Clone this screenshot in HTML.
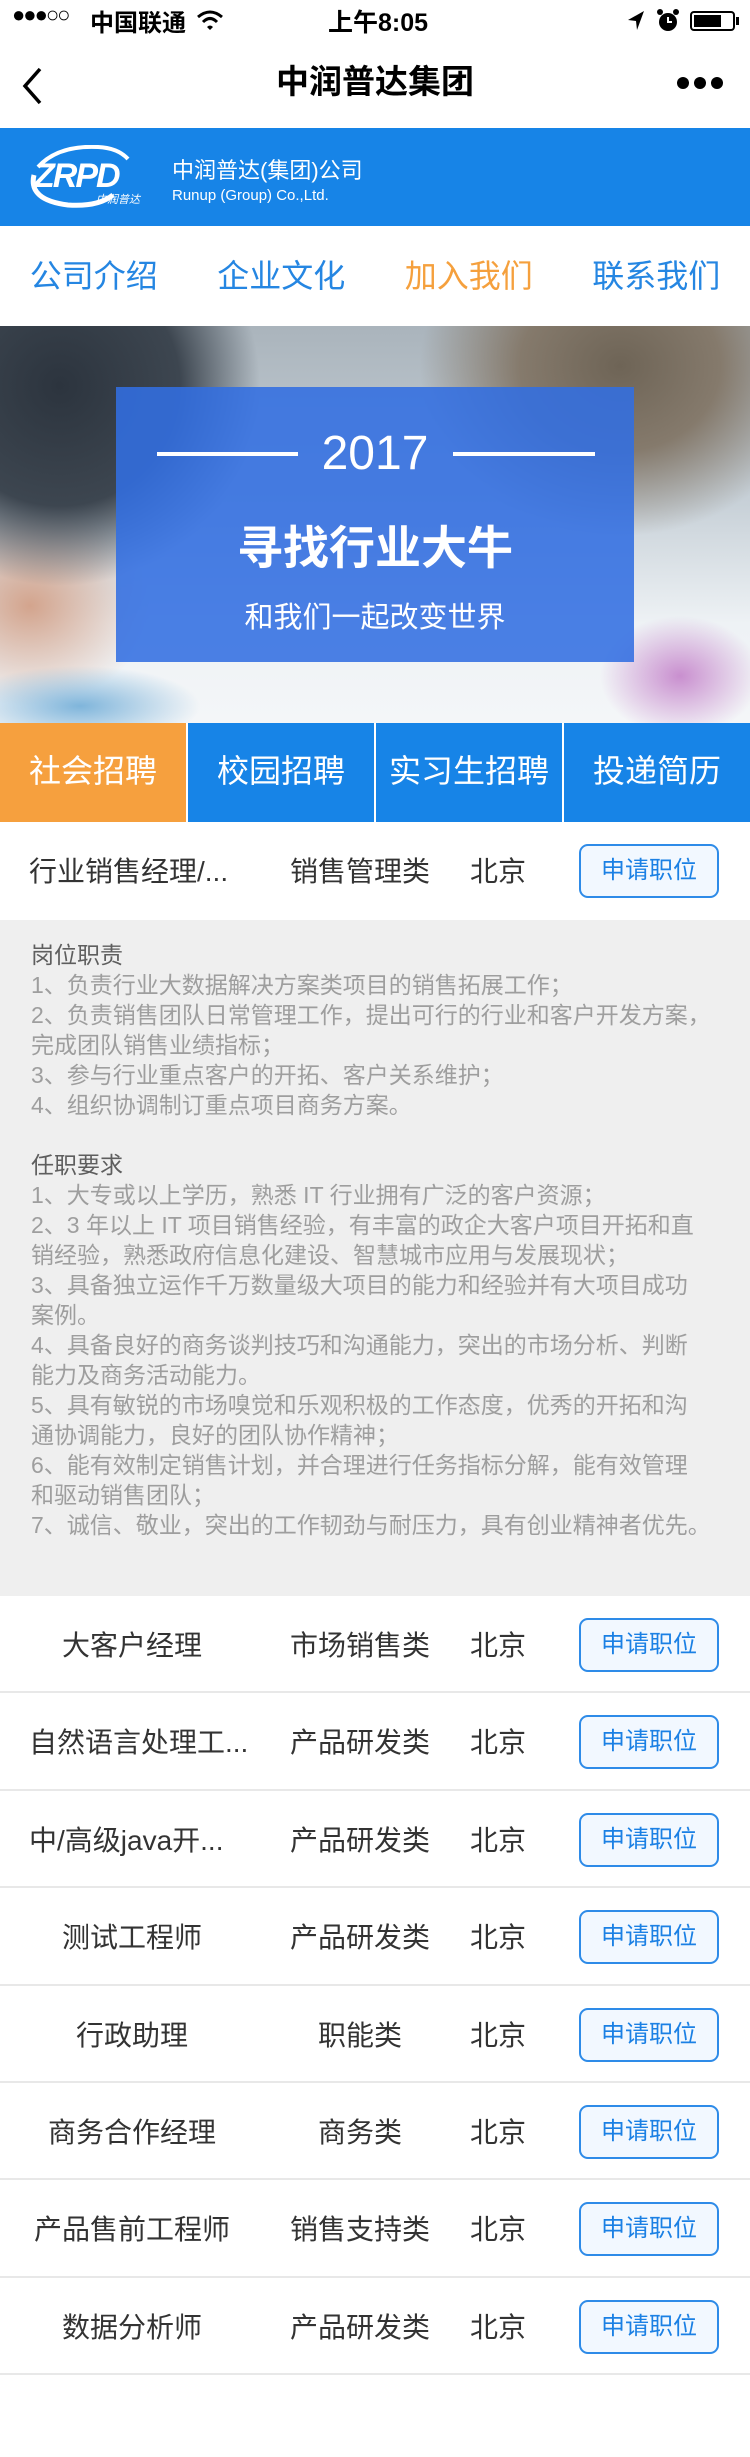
<!DOCTYPE html>
<html><head><meta charset="utf-8">
<style>
*{margin:0;padding:0;box-sizing:border-box}
body{width:750px;height:2457px;background:#fff;font-family:"Liberation Sans","Noto Sans CJK SC",sans-serif;position:relative;overflow:hidden}
.abs{position:absolute}
.status{top:0;left:0;width:750px;height:40px;font-size:25px;color:#000}
.nav{top:40px;left:0;width:750px;height:88px}
.banner{top:128px;left:0;width:750px;height:98px;background:#1784e7}
.tabs{top:226px;left:0;width:750px;height:100px;display:flex}
.tabs div{flex:1;text-align:center;line-height:100px;font-size:32px;color:#2586e2}
.hero{top:326px;left:0;width:750px;height:397px;overflow:hidden;background:#e6ecf0}
.cats{top:723px;left:0;width:750px;height:99px;display:flex}
.cats div{flex:1;text-align:center;line-height:96px;font-size:32px;color:#fff;background:#1784e7;border-left:2px solid #fff}
.cats div:first-child{background:#f6a03e;border-left:none}
.row{position:absolute;left:0;width:750px;height:97.4px;border-bottom:2px solid #e8e8e8;font-size:28px;color:#333}
.row .n{position:absolute;left:28px;width:208px;text-align:center;white-space:nowrap;top:2px;line-height:95px}
.row .n.l{text-align:left;left:29px}
.row .c{position:absolute;left:280px;width:160px;text-align:center;line-height:95px;top:2px}
.row .city{position:absolute;left:468px;width:60px;text-align:center;line-height:95px;top:2px}
.row .b{position:absolute;left:579px;top:22px;width:140px;height:54px;border:2px solid #2e8be8;border-radius:9px;background:#f2f8ff;color:#1b80e4;font-size:24px;text-align:center;line-height:50px}
.desc{top:920px;left:0;width:750px;height:676px;background:#efefef;padding:20px 0 0 31px;font-size:23px;line-height:30px;color:#9e9e9e;white-space:nowrap}
.desc .t{color:#5e5e5e}
</style></head><body>
<div class="abs status">
 <div class="abs" style="left:12px;top:2px;font-size:22px;letter-spacing:-2px">●●●○○</div>
 <div class="abs" style="left:90px;top:3px;font-size:24px;font-weight:bold">中国联通</div>
 <svg class="abs" style="left:196px;top:9px" width="28" height="22" viewBox="0 0 28 22"><path d="M2 8 Q14 -2 26 8" stroke="#000" stroke-width="3" fill="none"/><path d="M7 13 Q14 6 21 13" stroke="#000" stroke-width="3" fill="none"/><path d="M11 18 L14 21 L17 18 Q14 15 11 18Z" fill="#000"/></svg>
 <div class="abs" style="left:328px;top:3px;font-size:25px;font-weight:bold">上午8:05</div>
 <svg class="abs" style="left:626px;top:10px" width="20" height="22" viewBox="0 0 20 22"><path d="M18 1 L2 10 L10 11 L11 20Z" fill="#000"/></svg>
 <svg class="abs" style="left:656px;top:8px" width="24" height="26" viewBox="0 0 24 26"><circle cx="12" cy="14" r="9" fill="#000"/><path d="M12 9v5h4" stroke="#fff" stroke-width="2" fill="none"/><circle cx="4" cy="4" r="3" fill="#000"/><circle cx="20" cy="4" r="3" fill="#000"/></svg>
 <div class="abs" style="left:690px;top:11px;width:45px;height:20px;border:2px solid #000;border-radius:4px"><div style="margin:2px;width:27px;height:12px;background:#000"></div></div>
 <div class="abs" style="left:736px;top:17px;width:3px;height:8px;background:#000"></div>
</div>
<div class="abs nav">
 <svg class="abs" style="left:20px;top:26px" width="24" height="40" viewBox="0 0 24 40"><path d="M20 3 L5 20 L20 37" stroke="#000" stroke-width="3.5" fill="none"/></svg>
 <div class="abs" style="left:0;width:750px;text-align:center;top:20px;font-size:33px;font-weight:bold;color:#000;line-height:44px">中润普达集团</div>
 <div class="abs" style="left:677px;top:36px"><span style="display:inline-block;width:12px;height:12px;border-radius:50%;background:#000;margin-right:5px"></span><span style="display:inline-block;width:12px;height:12px;border-radius:50%;background:#000;margin-right:5px"></span><span style="display:inline-block;width:12px;height:12px;border-radius:50%;background:#000"></span></div>
</div>
<div class="abs banner">
 <svg class="abs" style="left:28px;top:17px" width="132" height="64" viewBox="0 0 132 64"><path d="M10 22 Q30 0 70 2 Q90 3 100 14" stroke="#fff" stroke-width="4" fill="none"/><path d="M6 30 Q0 55 40 60 Q70 62 85 50" stroke="#fff" stroke-width="5" fill="none"/><text x="6" y="42" font-family="Liberation Sans" font-style="italic" font-weight="bold" font-size="34" fill="#fff" letter-spacing="-2">ZRPD</text><text x="68" y="58" font-family="Noto Sans CJK SC" font-style="italic" font-size="11" fill="#fff">中润普达</text></svg>
 <div class="abs" style="left:172px;top:30px;font-size:22px;color:#fff;line-height:26px">中润普达(集团)公司</div>
 <div class="abs" style="left:172px;top:58px;font-size:15px;color:#fff;line-height:20px">Runup (Group) Co.,Ltd.</div>
</div>
<div class="abs tabs"><div>公司介绍</div><div>企业文化</div><div style="color:#f5a03d">加入我们</div><div>联系我们</div></div>
<div class="abs hero">
 <div class="abs" style="left:0;top:0;width:750px;height:397px;background:
  radial-gradient(ellipse 200px 200px at 60px 60px,#2c343e 0%,#3d4650 60%,rgba(60,70,80,0) 100%),
  radial-gradient(ellipse 200px 170px at 620px 40px,#6e6456 0%,#857a6c 50%,rgba(130,120,110,0) 100%),
  radial-gradient(ellipse 120px 100px at 30px 280px,#d3a48d 0%,rgba(211,164,141,0) 100%),
  linear-gradient(180deg,#aab4bc 0%,#c8d1d8 45%,#eef2f5 75%,#f4f6f8 100%)"></div>
 <div class="abs" style="left:0;top:330px;width:240px;height:67px;background:radial-gradient(ellipse 120px 40px at 80px 50px,#7fb5db,rgba(200,220,235,0))"></div>
 <div class="abs" style="left:600px;top:290px;width:150px;height:107px;background:radial-gradient(ellipse 80px 60px at 80px 60px,#c98fcf,rgba(230,220,235,0))"></div>
 <div class="abs" style="left:116px;top:61px;width:518px;height:275px;background:rgba(50,110,225,.88)"></div>
 <div class="abs" style="left:157px;top:126px;width:141px;height:4px;background:#fff"></div>
 <div class="abs" style="left:453px;top:126px;width:142px;height:4px;background:#fff"></div>
 <div class="abs" style="left:0;width:750px;text-align:center;top:100px;font-size:48px;color:#fff;line-height:56px">2017</div>
 <div class="abs" style="left:0;width:750px;text-align:center;top:194px;font-size:46px;color:#fff;font-weight:bold;line-height:56px">寻找行业大牛</div>
 <div class="abs" style="left:0;width:750px;text-align:center;top:274px;font-size:29px;color:#fff;line-height:36px">和我们一起改变世界</div>
</div>
<div class="abs cats"><div>社会招聘</div><div>校园招聘</div><div>实习生招聘</div><div>投递简历</div></div>
<div class="row" style="top:822px;height:98px;border-bottom:none"><div class="n l">行业销售经理/...</div><div class="c">销售管理类</div><div class="city">北京</div><div class="b">申请职位</div></div>
<div class="abs desc"><span class="t">岗位职责</span><br>1、负责行业大数据解决方案类项目的销售拓展工作；<br>2、负责销售团队日常管理工作，提出可行的行业和客户开发方案，<br>完成团队销售业绩指标；<br>3、参与行业重点客户的开拓、客户关系维护；<br>4、组织协调制订重点项目商务方案。<br><br><span class="t">任职要求</span><br>1、大专或以上学历，熟悉 IT 行业拥有广泛的客户资源；<br>2、3 年以上 IT 项目销售经验，有丰富的政企大客户项目开拓和直<br>销经验，熟悉政府信息化建设、智慧城市应用与发展现状；<br>3、具备独立运作千万数量级大项目的能力和经验并有大项目成功<br>案例。<br>4、具备良好的商务谈判技巧和沟通能力，突出的市场分析、判断<br>能力及商务活动能力。<br>5、具有敏锐的市场嗅觉和乐观积极的工作态度，优秀的开拓和沟<br>通协调能力，良好的团队协作精神；<br>6、能有效制定销售计划，并合理进行任务指标分解，能有效管理<br>和驱动销售团队；<br>7、诚信、敬业，突出的工作韧劲与耐压力，具有创业精神者优先。</div>
<div class="row" style="top:1596px"><div class="n">大客户经理</div><div class="c">市场销售类</div><div class="city">北京</div><div class="b">申请职位</div></div>
<div class="row" style="top:1693.4px"><div class="n l">自然语言处理工...</div><div class="c">产品研发类</div><div class="city">北京</div><div class="b">申请职位</div></div>
<div class="row" style="top:1790.8px"><div class="n l">中/高级java开...</div><div class="c">产品研发类</div><div class="city">北京</div><div class="b">申请职位</div></div>
<div class="row" style="top:1888.2px"><div class="n">测试工程师</div><div class="c">产品研发类</div><div class="city">北京</div><div class="b">申请职位</div></div>
<div class="row" style="top:1985.6px"><div class="n">行政助理</div><div class="c">职能类</div><div class="city">北京</div><div class="b">申请职位</div></div>
<div class="row" style="top:2083px"><div class="n">商务合作经理</div><div class="c">商务类</div><div class="city">北京</div><div class="b">申请职位</div></div>
<div class="row" style="top:2180.4px"><div class="n">产品售前工程师</div><div class="c">销售支持类</div><div class="city">北京</div><div class="b">申请职位</div></div>
<div class="row" style="top:2277.8px"><div class="n">数据分析师</div><div class="c">产品研发类</div><div class="city">北京</div><div class="b">申请职位</div></div>
</body></html>
